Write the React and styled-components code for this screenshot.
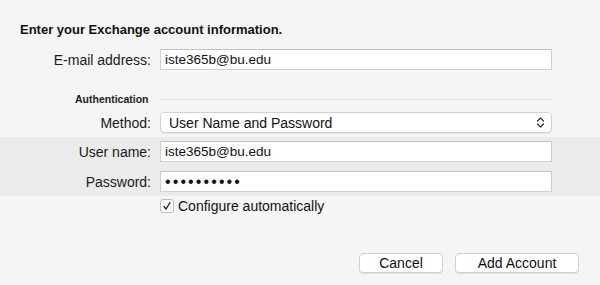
import styled, { createGlobalStyle } from "styled-components";

const GlobalStyle = createGlobalStyle`
  html, body {
    margin: 0;
    padding: 0;
    background: #f5f5f5;
  }
  body {
    font-family: "Liberation Sans", Arial, sans-serif;
    color: #1a1a1a;
  }
`;

const Sheet = styled.div`
  width: 600px;
  height: 285px;
  background: #f5f5f5;
  display: flex;
  flex-direction: column;
  overflow: hidden;
`;

const Title = styled.h1`
  margin: 22px 0 0 20px;
  font-size: 13px;
  line-height: 16px;
  font-weight: 700;
  color: #111;
`;

const Row = styled.div`
  display: grid;
  grid-template-columns: 151px 392px;
  column-gap: 9px;
  align-items: center;
  margin-top: ${(p) => p.top || 0}px;
  height: ${(p) => p.h || 21}px;
`;

const Label = styled.label`
  text-align: right;
  font-size: 14px;
  color: #1a1a1a;
`;

const TextBox = styled.div`
  box-sizing: border-box;
  height: 21px;
  background: #fff;
  border: 1px solid #cfcfcf;
  border-top-color: #c2c2c2;
  padding: 0 4px;
  font-size: ${(p) => (p.secret ? "16px" : "13.5px")};
  line-height: 19px;
  color: #111;
  letter-spacing: ${(p) => (p.secret ? "2.1px" : "0")};
`;

const SectionHead = styled.div`
  display: grid;
  grid-template-columns: 151px 392px;
  column-gap: 9px;
  align-items: center;
  margin-top: 23px;
  height: 12px;
`;

const SectionTitle = styled.span`
  padding-left: 75px;
  font-size: 10.5px;
  font-weight: 700;
  color: #222;
`;

const Rule = styled.div`
  height: 1px;
  background: #dcdcdc;
`;

const Select = styled.div`
  box-sizing: border-box;
  height: 21px;
  background: #fff;
  border: 1px solid #d2d2d2;
  border-radius: 4px;
  box-shadow: 0 1px 0 rgba(0, 0, 0, 0.06);
  padding: 0 6px 0 8px;
  display: flex;
  align-items: center;
  justify-content: space-between;
  font-size: 14px;
  color: #111;
`;

const Band = styled.div`
  background: #ebebeb;
  margin-top: 4px;
  padding: 4px 0 4px;
  display: flex;
  flex-direction: column;
  gap: 9px;
`;

const CheckRow = styled.div`
  display: flex;
  align-items: center;
  gap: 4px;
  margin: 3px 0 0 160px;
  height: 14px;
  font-size: 14px;
  color: #111;
`;

const CheckBox = styled.span`
  box-sizing: border-box;
  width: 14px;
  height: 14px;
  border: 1px solid #bdbdbd;
  border-radius: 3px;
  background: #fff;
  display: flex;
  align-items: center;
  justify-content: center;
`;

const Footer = styled.div`
  display: flex;
  justify-content: flex-end;
  gap: 12px;
  margin-top: 40px;
  padding-right: 21px;
`;

const Button = styled.button`
  box-sizing: border-box;
  width: ${(p) => p.w}px;
  height: 20px;
  background: #fff;
  border: 1px solid #d0d0d0;
  border-radius: 4px;
  box-shadow: 0 1px 0 rgba(0, 0, 0, 0.08);
  font-family: inherit;
  font-size: 14px;
  color: #111;
  padding: 0;
`;

const Chevrons = () => (
  <svg width="9" height="13" viewBox="0 0 9 13">
    <path d="M1.5 5 L4.5 2 L7.5 5 M1.5 8 L4.5 11 L7.5 8" fill="none" stroke="#333" strokeWidth="1.3" strokeLinecap="round" strokeLinejoin="round" />
  </svg>
);

const Tick = () => (
  <svg width="10" height="10" viewBox="0 0 10 10">
    <path d="M2 5.5 L4 8 L8 1.5" fill="none" stroke="#222" strokeWidth="1.4" strokeLinecap="round" strokeLinejoin="round" />
  </svg>
);

export default function App() {
  return (
    <>
      <GlobalStyle />
      <Sheet>
        <Title>Enter your Exchange account information.</Title>
        <Row top={11}>
          <Label>E-mail address:</Label>
          <TextBox>iste365b@bu.edu</TextBox>
        </Row>
        <SectionHead>
          <SectionTitle>Authentication</SectionTitle>
          <Rule />
        </SectionHead>
        <Row top={7}>
          <Label>Method:</Label>
          <Select>
            User Name and Password
            <Chevrons />
          </Select>
        </Row>
        <Band>
          <Row>
            <Label>User name:</Label>
            <TextBox>iste365b@bu.edu</TextBox>
          </Row>
          <Row>
            <Label>Password:</Label>
            <TextBox secret>••••••••••</TextBox>
          </Row>
        </Band>
        <CheckRow>
          <CheckBox>
            <Tick />
          </CheckBox>
          Configure automatically
        </CheckRow>
        <Footer>
          <Button w={84}>Cancel</Button>
          <Button w={124}>Add Account</Button>
        </Footer>
      </Sheet>
    </>
  );
}
